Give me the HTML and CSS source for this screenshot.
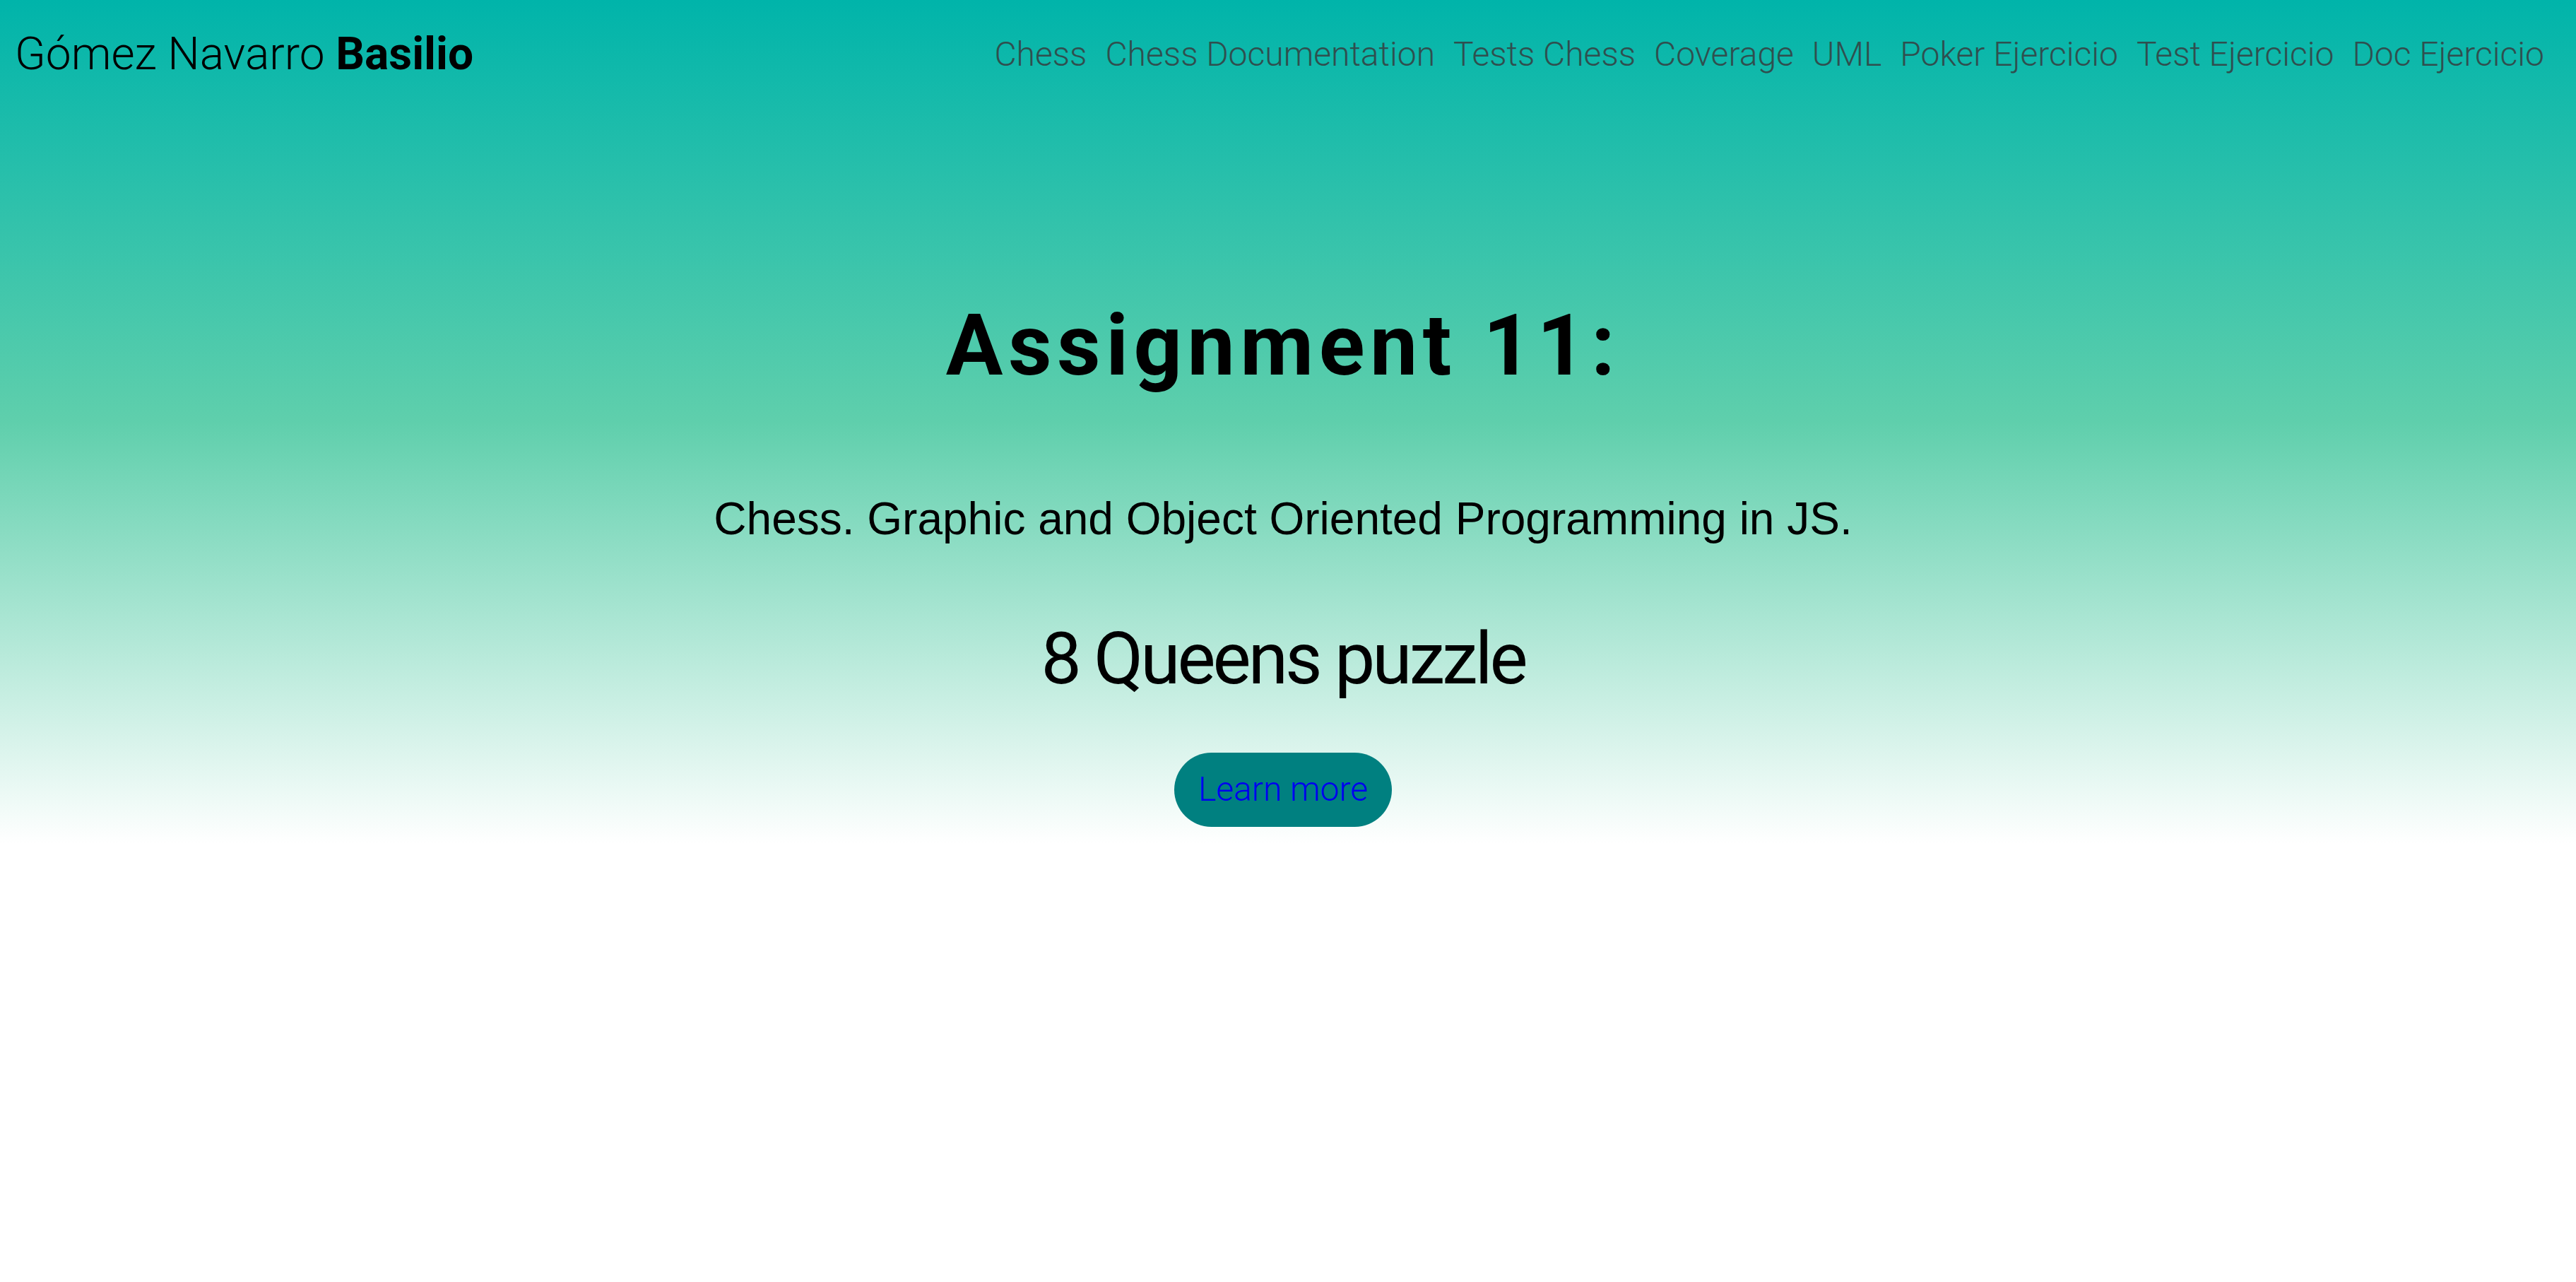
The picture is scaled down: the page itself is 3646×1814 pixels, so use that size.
FILE: index.html
```html
<!DOCTYPE html>
<html lang="es">
<head>
<meta charset="utf-8">
<title>Assignment 11</title>
<link rel="stylesheet" href="styles.css">
</head>
<body>
<header class="hero">
  <nav class="topbar">
    <div class="brand">Gómez Navarro <strong>Basilio</strong></div>
    <ul class="menu">
      <li><a href="#">Chess</a></li>
      <li><a href="#">Chess Documentation</a></li>
      <li><a href="#">Tests Chess</a></li>
      <li><a href="#">Coverage</a></li>
      <li><a href="#">UML</a></li>
      <li><a href="#">Poker Ejercicio</a></li>
      <li><a href="#">Test Ejercicio</a></li>
      <li><a href="#">Doc Ejercicio</a></li>
    </ul>
  </nav>
  <section class="intro">
    <h1 class="title">Assignment 11:</h1>
    <p class="subtitle">Chess. Graphic and Object Oriented Programming in JS.</p>
    <h2 class="puzzle">8 Queens puzzle</h2>
    <a class="cta" href="#">Learn more</a>
  </section>
</header>
</body>
</html>
```

FILE: styles.css
```css
html, body {
  margin: 0;
  padding: 0;
  background: #ffffff;
}

body {
  font-family: Roboto, "Liberation Sans", sans-serif;
}

.hero {
  background: linear-gradient(to bottom, #00b4aa 0%, #5fcfac 50%, #ffffff 100%);
  padding-bottom: 24px;
}

.topbar {
  display: flex;
  justify-content: space-between;
  align-items: center;
  padding: 45px 45px 0 21px;
}

.brand {
  font-size: 64px;
  line-height: 1;
  font-weight: 300;
  color: #000;
}

.brand strong {
  font-weight: 700;
}

.menu {
  display: flex;
  align-items: center;
  gap: 26px;
  list-style: none;
  margin: 0;
  padding: 0;
}

.menu a {
  font-size: 48px;
  line-height: 1;
  font-weight: 300;
  color: #2f4f4f;
  text-decoration: none;
}

.intro {
  display: flex;
  flex-direction: column;
  align-items: center;
  text-align: center;
  padding: 308px 14px 0 0;
}

.title {
  margin: 0;
  font-family: Roboto, sans-serif;
  font-size: 120px;
  line-height: 1.2;
  font-weight: 700;
  letter-spacing: 7.5px;
  color: #000;
}

.subtitle {
  margin: 135px 0 0;
  font-family: "Liberation Sans", Arial, sans-serif;
  font-size: 64px;
  line-height: 1.2;
  color: #000;
}

.puzzle {
  margin: 98px 0 0;
  font-family: Roboto, sans-serif;
  font-size: 102px;
  line-height: 1.2;
  font-weight: 400;
  letter-spacing: -4px;
  color: #000;
}

.cta {
  margin-top: 72px;
  display: inline-block;
  padding: 28px 34px 29px;
  border-radius: 60px;
  background: #008080;
  color: #0000ee;
  font-size: 48px;
  line-height: 1;
  font-weight: 300;
  text-decoration: none;
}
```
